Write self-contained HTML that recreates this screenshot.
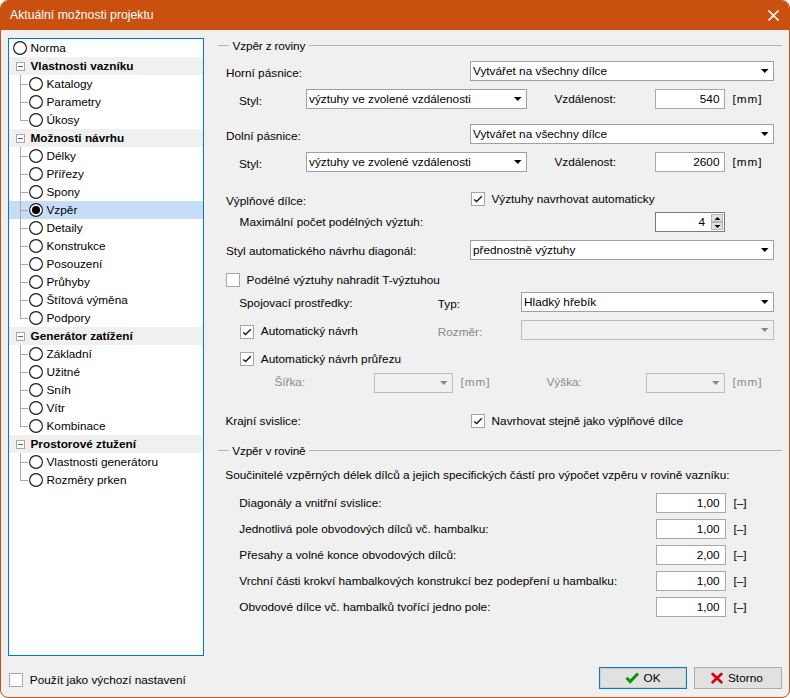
<!DOCTYPE html>
<html><head><meta charset="utf-8"><style>
html,body{margin:0;padding:0;background:#fff;width:790px;height:698px;overflow:hidden}
#win{position:absolute;left:0;top:0;width:790px;height:698px;box-sizing:border-box;border:1px solid #ca5010;border-radius:8px;background:#f0f0f0;overflow:hidden}
#title{position:absolute;left:-1px;top:-1px;width:790px;height:30px;background:#ca5010}
#c{position:absolute;left:0;top:0;width:790px;height:698px}
.t{position:absolute;font-family:"Liberation Sans",sans-serif;font-size:11.8px;line-height:16px;white-space:pre;color:#000}
.w{color:#fff}
.b{font-weight:bold}
.g{color:#8a8a8a}
.ab{position:absolute}
.tree,.cb,.tb,.ck,.hdr,.sel,.exp,.spb,.btn{position:absolute;box-sizing:border-box}
.tree{border:1px solid #0078d7;background:#fff}
.hdr{background:#f0f0f0}
.sel{background:#c6ddf8}
.exp{border:1px solid #a8a8a8;background:#fff}
.ln{background:#aaaaaa}
.gl{height:1px;background:#b4b4b4}
.cb{border:1px solid #a0a0a0;background:#fff}
.cb.dis{border-color:#bdbdbd;background:#f0f0f0}
.tb{border:1px solid #a8a8a8;background:#fff}
.ck{border:1px solid #a5a5a5;background:#fff}
.spb{background:#e1e1e1;border:1px solid #b4b4b4}
.tb.dk{border-color:#7a7a7a}
.btn{border:1px solid #adadad;background:#e1e1e1}
.btn.def{border:1px solid #0078d7;box-shadow:inset 0 0 0 1px #d2cdc8}
</style></head><body>
<div id="win"><div id="title"></div></div>
<div id="c">
<div class="t w" style="left:10px;top:7.0px;font-size:12.25px">Aktuální možnosti projektu</div>
<svg class="ab" style="left:767px;top:9px" width="13" height="13"><path d="M1.5 1.5L11.5 11.5M11.5 1.5L1.5 11.5" stroke="#fff" stroke-width="1.7"/></svg>
<div class="tree" style="left:8px;top:38px;width:196px;height:618px"></div>
<svg class="ab" style="left:13px;top:41px" width="14" height="14"><circle cx="7" cy="7" r="6.4" fill="#fff" stroke="#1e1e1e" stroke-width="1.15"/></svg>
<div class="t " style="left:30.5px;top:39.8px;">Norma</div>
<div class="hdr" style="left:9px;top:57px;width:194px;height:18px"></div>
<div class="exp" style="left:16px;top:62px;width:9px;height:9px"></div>
<div class="ab" style="left:18px;top:66px;width:5px;height:1px;background:#666"></div>
<div class="t b" style="left:30.5px;top:57.8px;">Vlastnosti vazníku</div>
<div class="ab ln" style="left:20px;top:84px;width:8px;height:1px"></div>
<svg class="ab" style="left:29px;top:77px" width="14" height="14"><circle cx="7" cy="7" r="6.4" fill="#fff" stroke="#1e1e1e" stroke-width="1.15"/></svg>
<div class="t " style="left:46.5px;top:75.8px;">Katalogy</div>
<div class="ab ln" style="left:20px;top:102px;width:8px;height:1px"></div>
<svg class="ab" style="left:29px;top:95px" width="14" height="14"><circle cx="7" cy="7" r="6.4" fill="#fff" stroke="#1e1e1e" stroke-width="1.15"/></svg>
<div class="t " style="left:46.5px;top:93.8px;">Parametry</div>
<div class="ab ln" style="left:20px;top:120px;width:8px;height:1px"></div>
<svg class="ab" style="left:29px;top:113px" width="14" height="14"><circle cx="7" cy="7" r="6.4" fill="#fff" stroke="#1e1e1e" stroke-width="1.15"/></svg>
<div class="t " style="left:46.5px;top:111.8px;">Úkosy</div>
<div class="hdr" style="left:9px;top:129px;width:194px;height:18px"></div>
<div class="exp" style="left:16px;top:134px;width:9px;height:9px"></div>
<div class="ab" style="left:18px;top:138px;width:5px;height:1px;background:#666"></div>
<div class="t b" style="left:30.5px;top:129.8px;">Možnosti návrhu</div>
<div class="ab ln" style="left:20px;top:156px;width:8px;height:1px"></div>
<svg class="ab" style="left:29px;top:149px" width="14" height="14"><circle cx="7" cy="7" r="6.4" fill="#fff" stroke="#1e1e1e" stroke-width="1.15"/></svg>
<div class="t " style="left:46.5px;top:147.8px;">Délky</div>
<div class="ab ln" style="left:20px;top:174px;width:8px;height:1px"></div>
<svg class="ab" style="left:29px;top:167px" width="14" height="14"><circle cx="7" cy="7" r="6.4" fill="#fff" stroke="#1e1e1e" stroke-width="1.15"/></svg>
<div class="t " style="left:46.5px;top:165.8px;">Přířezy</div>
<div class="ab ln" style="left:20px;top:192px;width:8px;height:1px"></div>
<svg class="ab" style="left:29px;top:185px" width="14" height="14"><circle cx="7" cy="7" r="6.4" fill="#fff" stroke="#1e1e1e" stroke-width="1.15"/></svg>
<div class="t " style="left:46.5px;top:183.8px;">Spony</div>
<div class="sel" style="left:9px;top:201px;width:194px;height:18px"></div>
<div class="ab ln" style="left:20px;top:210px;width:8px;height:1px"></div>
<svg class="ab" style="left:29px;top:203px" width="14" height="14"><circle cx="7" cy="7" r="6.4" fill="#fff" stroke="#1e1e1e" stroke-width="1.15"/><circle cx="7" cy="7" r="4" fill="#000"/></svg>
<div class="t " style="left:46.5px;top:201.8px;">Vzpěr</div>
<div class="ab ln" style="left:20px;top:228px;width:8px;height:1px"></div>
<svg class="ab" style="left:29px;top:221px" width="14" height="14"><circle cx="7" cy="7" r="6.4" fill="#fff" stroke="#1e1e1e" stroke-width="1.15"/></svg>
<div class="t " style="left:46.5px;top:219.8px;">Detaily</div>
<div class="ab ln" style="left:20px;top:246px;width:8px;height:1px"></div>
<svg class="ab" style="left:29px;top:239px" width="14" height="14"><circle cx="7" cy="7" r="6.4" fill="#fff" stroke="#1e1e1e" stroke-width="1.15"/></svg>
<div class="t " style="left:46.5px;top:237.8px;">Konstrukce</div>
<div class="ab ln" style="left:20px;top:264px;width:8px;height:1px"></div>
<svg class="ab" style="left:29px;top:257px" width="14" height="14"><circle cx="7" cy="7" r="6.4" fill="#fff" stroke="#1e1e1e" stroke-width="1.15"/></svg>
<div class="t " style="left:46.5px;top:255.8px;">Posouzení</div>
<div class="ab ln" style="left:20px;top:282px;width:8px;height:1px"></div>
<svg class="ab" style="left:29px;top:275px" width="14" height="14"><circle cx="7" cy="7" r="6.4" fill="#fff" stroke="#1e1e1e" stroke-width="1.15"/></svg>
<div class="t " style="left:46.5px;top:273.8px;">Průhyby</div>
<div class="ab ln" style="left:20px;top:300px;width:8px;height:1px"></div>
<svg class="ab" style="left:29px;top:293px" width="14" height="14"><circle cx="7" cy="7" r="6.4" fill="#fff" stroke="#1e1e1e" stroke-width="1.15"/></svg>
<div class="t " style="left:46.5px;top:291.8px;">Štítová výměna</div>
<div class="ab ln" style="left:20px;top:318px;width:8px;height:1px"></div>
<svg class="ab" style="left:29px;top:311px" width="14" height="14"><circle cx="7" cy="7" r="6.4" fill="#fff" stroke="#1e1e1e" stroke-width="1.15"/></svg>
<div class="t " style="left:46.5px;top:309.8px;">Podpory</div>
<div class="hdr" style="left:9px;top:327px;width:194px;height:18px"></div>
<div class="exp" style="left:16px;top:332px;width:9px;height:9px"></div>
<div class="ab" style="left:18px;top:336px;width:5px;height:1px;background:#666"></div>
<div class="t b" style="left:30.5px;top:327.8px;">Generátor zatížení</div>
<div class="ab ln" style="left:20px;top:354px;width:8px;height:1px"></div>
<svg class="ab" style="left:29px;top:347px" width="14" height="14"><circle cx="7" cy="7" r="6.4" fill="#fff" stroke="#1e1e1e" stroke-width="1.15"/></svg>
<div class="t " style="left:46.5px;top:345.8px;">Základní</div>
<div class="ab ln" style="left:20px;top:372px;width:8px;height:1px"></div>
<svg class="ab" style="left:29px;top:365px" width="14" height="14"><circle cx="7" cy="7" r="6.4" fill="#fff" stroke="#1e1e1e" stroke-width="1.15"/></svg>
<div class="t " style="left:46.5px;top:363.8px;">Užitné</div>
<div class="ab ln" style="left:20px;top:390px;width:8px;height:1px"></div>
<svg class="ab" style="left:29px;top:383px" width="14" height="14"><circle cx="7" cy="7" r="6.4" fill="#fff" stroke="#1e1e1e" stroke-width="1.15"/></svg>
<div class="t " style="left:46.5px;top:381.8px;">Sníh</div>
<div class="ab ln" style="left:20px;top:408px;width:8px;height:1px"></div>
<svg class="ab" style="left:29px;top:401px" width="14" height="14"><circle cx="7" cy="7" r="6.4" fill="#fff" stroke="#1e1e1e" stroke-width="1.15"/></svg>
<div class="t " style="left:46.5px;top:399.8px;">Vítr</div>
<div class="ab ln" style="left:20px;top:426px;width:8px;height:1px"></div>
<svg class="ab" style="left:29px;top:419px" width="14" height="14"><circle cx="7" cy="7" r="6.4" fill="#fff" stroke="#1e1e1e" stroke-width="1.15"/></svg>
<div class="t " style="left:46.5px;top:417.8px;">Kombinace</div>
<div class="hdr" style="left:9px;top:435px;width:194px;height:18px"></div>
<div class="exp" style="left:16px;top:440px;width:9px;height:9px"></div>
<div class="ab" style="left:18px;top:444px;width:5px;height:1px;background:#666"></div>
<div class="t b" style="left:30.5px;top:435.8px;">Prostorové ztužení</div>
<div class="ab ln" style="left:20px;top:462px;width:8px;height:1px"></div>
<svg class="ab" style="left:29px;top:455px" width="14" height="14"><circle cx="7" cy="7" r="6.4" fill="#fff" stroke="#1e1e1e" stroke-width="1.15"/></svg>
<div class="t " style="left:46.5px;top:453.8px;">Vlastnosti generátoru</div>
<div class="ab ln" style="left:20px;top:480px;width:8px;height:1px"></div>
<svg class="ab" style="left:29px;top:473px" width="14" height="14"><circle cx="7" cy="7" r="6.4" fill="#fff" stroke="#1e1e1e" stroke-width="1.15"/></svg>
<div class="t " style="left:46.5px;top:471.8px;">Rozměry prken</div>
<div class="ab ln" style="left:20px;top:75px;width:1px;height:46px"></div>
<div class="ab ln" style="left:20px;top:147px;width:1px;height:172px"></div>
<div class="ab ln" style="left:20px;top:345px;width:1px;height:82px"></div>
<div class="ab ln" style="left:20px;top:453px;width:1px;height:28px"></div>
<div class="ab gl" style="left:218px;top:45px;width:11px"></div>
<div class="ab gl" style="left:309px;top:45px;width:473px"></div>
<div class="t " style="left:232.5px;top:38.0px;letter-spacing:-0.15px">Vzpěr z roviny</div>
<div class="t " style="left:226px;top:64.5px;">Horní pásnice:</div>
<div class="cb" style="left:470px;top:61px;width:304px;height:20px"></div>
<svg class="ab" style="left:761px;top:69px" width="8" height="5"><path d="M0 0H7.5L3.75 4Z" fill="#000"/></svg>
<div class="t " style="left:473px;top:62.6px;">Vytvářet na všechny dílce</div>
<div class="t " style="left:239px;top:92.5px;">Styl:</div>
<div class="cb" style="left:306px;top:89px;width:221px;height:20px"></div>
<svg class="ab" style="left:514px;top:97px" width="8" height="5"><path d="M0 0H7.5L3.75 4Z" fill="#000"/></svg>
<div class="t " style="left:309px;top:90.6px;">výztuhy ve zvolené vzdálenosti</div>
<div class="t " style="left:554.4px;top:90.9px;">Vzdálenost:</div>
<div class="tb" style="left:655px;top:89px;width:70px;height:20px"></div>
<div class="t " style="right:70.5px;top:90.5px">540</div>
<div class="t " style="left:732.6px;top:91.2px;letter-spacing:0.9px">[mm]</div>
<div class="t " style="left:226px;top:127.7px;">Dolní pásnice:</div>
<div class="cb" style="left:470px;top:124px;width:304px;height:20px"></div>
<svg class="ab" style="left:761px;top:132px" width="8" height="5"><path d="M0 0H7.5L3.75 4Z" fill="#000"/></svg>
<div class="t " style="left:473px;top:125.6px;">Vytvářet na všechny dílce</div>
<div class="t " style="left:239px;top:155.5px;">Styl:</div>
<div class="cb" style="left:306px;top:152px;width:221px;height:20px"></div>
<svg class="ab" style="left:514px;top:160px" width="8" height="5"><path d="M0 0H7.5L3.75 4Z" fill="#000"/></svg>
<div class="t " style="left:309px;top:153.6px;">výztuhy ve zvolené vzdálenosti</div>
<div class="t " style="left:554.4px;top:153.9px;">Vzdálenost:</div>
<div class="tb" style="left:655px;top:152px;width:70px;height:20px"></div>
<div class="t " style="right:70.5px;top:153.5px">2600</div>
<div class="t " style="left:732.6px;top:154.2px;letter-spacing:0.9px">[mm]</div>
<div class="t " style="left:226px;top:193.3px;">Výplňové dílce:</div>
<div class="ck" style="left:471px;top:192px;width:14px;height:14px"></div>
<svg class="ab" style="left:471px;top:192px" width="14" height="14"><path d="M3.2 7.4L5.6 9.6L10.8 4.3" fill="none" stroke="#1a1a1a" stroke-width="1.4"/></svg>
<div class="t " style="left:491.4px;top:190.7px;">Výztuhy navrhovat automaticky</div>
<div class="t " style="left:239.6px;top:213.8px;">Maximální počet podélných výztuh:</div>
<div class="tb dk" style="left:655px;top:212px;width:70px;height:20px"></div>
<div class="t " style="right:85px;top:213.8px">4</div>
<div class="spb" style="left:711px;top:214px;width:12px;height:8px"></div>
<div class="spb" style="left:711px;top:222px;width:12px;height:8px"></div>
<svg class="ab" style="left:714px;top:216px" width="8" height="6"><path d="M0.5 4H6.5L3.5 1Z" fill="#000"/></svg>
<svg class="ab" style="left:714px;top:224px" width="8" height="6"><path d="M0.5 1H6.5L3.5 4Z" fill="#000"/></svg>
<div class="t " style="left:226px;top:243.3px;">Styl automatického návrhu diagonál:</div>
<div class="cb" style="left:470px;top:240px;width:304px;height:20px"></div>
<svg class="ab" style="left:761px;top:248px" width="8" height="5"><path d="M0 0H7.5L3.75 4Z" fill="#000"/></svg>
<div class="t " style="left:473px;top:241.6px;">přednostně výztuhy</div>
<div class="ck" style="left:226px;top:273px;width:14px;height:14px"></div>
<div class="t " style="left:246.6px;top:272.0px;">Podélné výztuhy nahradit T-výztuhou</div>
<div class="t " style="left:239.2px;top:295.4px;">Spojovací prostředky:</div>
<div class="t " style="left:437.7px;top:296.0px;">Typ:</div>
<div class="cb" style="left:521px;top:292px;width:253px;height:20px"></div>
<svg class="ab" style="left:761px;top:300px" width="8" height="5"><path d="M0 0H7.5L3.75 4Z" fill="#000"/></svg>
<div class="t " style="left:524px;top:293.6px;">Hladký hřebík</div>
<div class="ck" style="left:240px;top:325px;width:14px;height:14px"></div>
<svg class="ab" style="left:240px;top:325px" width="14" height="14"><path d="M3.2 7.4L5.6 9.6L10.8 4.3" fill="none" stroke="#1a1a1a" stroke-width="1.4"/></svg>
<div class="t " style="left:260.8px;top:323.3px;">Automatický návrh</div>
<div class="t g" style="left:437.7px;top:323.9px;">Rozměr:</div>
<div class="cb dis" style="left:521px;top:320px;width:253px;height:20px"></div>
<svg class="ab" style="left:761px;top:328px" width="8" height="5"><path d="M0 0H7.5L3.75 4Z" fill="#888"/></svg>
<div class="ck" style="left:240px;top:352px;width:14px;height:14px"></div>
<svg class="ab" style="left:240px;top:352px" width="14" height="14"><path d="M3.2 7.4L5.6 9.6L10.8 4.3" fill="none" stroke="#1a1a1a" stroke-width="1.4"/></svg>
<div class="t " style="left:260.8px;top:350.8px;">Automatický návrh průřezu</div>
<div class="t g" style="left:274.4px;top:374.3px;">Šířka:</div>
<div class="cb dis" style="left:374px;top:373px;width:79px;height:20px"></div>
<svg class="ab" style="left:440px;top:381px" width="8" height="5"><path d="M0 0H7.5L3.75 4Z" fill="#888"/></svg>
<div class="t g" style="left:460.6px;top:374.3px;letter-spacing:0.9px">[mm]</div>
<div class="t g" style="left:546.5px;top:374.3px;">Výška:</div>
<div class="cb dis" style="left:646px;top:373px;width:79px;height:20px"></div>
<svg class="ab" style="left:712px;top:381px" width="8" height="5"><path d="M0 0H7.5L3.75 4Z" fill="#888"/></svg>
<div class="t g" style="left:732.5px;top:374.3px;letter-spacing:0.9px">[mm]</div>
<div class="t " style="left:225.4px;top:412.7px;">Krajní svislice:</div>
<div class="ck" style="left:471px;top:414px;width:14px;height:14px"></div>
<svg class="ab" style="left:471px;top:414px" width="14" height="14"><path d="M3.2 7.4L5.6 9.6L10.8 4.3" fill="none" stroke="#1a1a1a" stroke-width="1.4"/></svg>
<div class="t " style="left:491.6px;top:412.7px;">Navrhovat stejně jako výplňové dílce</div>
<div class="ab gl" style="left:218px;top:450px;width:11px"></div>
<div class="ab gl" style="left:309px;top:450px;width:473px"></div>
<div class="t " style="left:232.2px;top:442.8px;letter-spacing:-0.15px">Vzpěr v rovině</div>
<div class="t " style="left:225.3px;top:466.8px;">Součinitelé vzpěrných délek dílců a jejich specifických částí pro výpočet vzpěru v rovině vazníku:</div>
<div class="t " style="left:239.3px;top:494.8px;">Diagonály a vnitřní svislice:</div>
<div class="tb" style="left:656px;top:493px;width:70px;height:20px"></div>
<div class="t " style="right:70.39999999999998px;top:494.8px">1,00</div>
<div class="t " style="left:733.5px;top:494.8px;">[–]</div>
<div class="t " style="left:239.3px;top:520.8px;">Jednotlivá pole obvodových dílců vč. hambalku:</div>
<div class="tb" style="left:656px;top:519px;width:70px;height:20px"></div>
<div class="t " style="right:70.39999999999998px;top:520.8px">1,00</div>
<div class="t " style="left:733.5px;top:520.8px;">[–]</div>
<div class="t " style="left:239.3px;top:546.8px;">Přesahy a volné konce obvodových dílců:</div>
<div class="tb" style="left:656px;top:545px;width:70px;height:20px"></div>
<div class="t " style="right:70.39999999999998px;top:546.8px">2,00</div>
<div class="t " style="left:733.5px;top:546.8px;">[–]</div>
<div class="t " style="left:239.3px;top:572.8px;">Vrchní části krokví hambalkových konstrukcí bez podepření u hambalku:</div>
<div class="tb" style="left:656px;top:571px;width:70px;height:20px"></div>
<div class="t " style="right:70.39999999999998px;top:572.8px">1,00</div>
<div class="t " style="left:733.5px;top:572.8px;">[–]</div>
<div class="t " style="left:239.3px;top:598.8px;">Obvodové dílce vč. hambalků tvořící jedno pole:</div>
<div class="tb" style="left:656px;top:597px;width:70px;height:20px"></div>
<div class="t " style="right:70.39999999999998px;top:598.8px">1,00</div>
<div class="t " style="left:733.5px;top:598.8px;">[–]</div>
<div class="ck" style="left:9px;top:673px;width:14px;height:14px"></div>
<div class="t " style="left:29.8px;top:671.7px;">Použít jako výchozí nastavení</div>
<div class="btn def" style="left:599px;top:667px;width:88px;height:22px"></div>
<svg class="ab" style="left:625px;top:672px" width="15" height="12"><path d="M1.5 5.8L5.2 9.5L13 1.5" fill="none" stroke="#109010" stroke-width="3"/></svg>
<div class="t " style="left:643.6px;top:670.0px;">OK</div>
<div class="btn" style="left:694px;top:667px;width:88px;height:22px"></div>
<svg class="ab" style="left:709px;top:670px" width="16" height="16"><path d="M3.6 3.9L12.4 12.3M12.4 3.9L3.6 12.3" stroke="#cc0812" stroke-width="2.7" stroke-linecap="round"/></svg>
<div class="t " style="left:728px;top:670.0px;">Storno</div>
</div>
</body></html>
